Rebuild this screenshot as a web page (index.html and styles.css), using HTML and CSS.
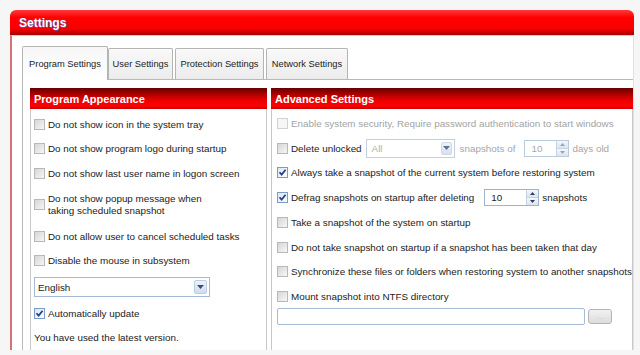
FILE: index.html
```html
<!DOCTYPE html>
<html>
<head>
<meta charset="utf-8">
<title>Settings</title>
<link rel="stylesheet" href="styles.css">
</head>
<body>
<div class="window">
  <div class="titlebar">Settings</div>
  <div class="winbody">
    <div class="tabs">
      <div class="tab active tab-program">Program Settings</div>
      <div class="tab tab-user">User Settings</div>
      <div class="tab tab-protection">Protection Settings</div>
      <div class="tab tab-network">Network Settings</div>
    </div>
    <div class="tabpanel">
      <section class="group group-left">
        <div class="ghead">Program Appearance</div>
        <div class="glist glist-left">
          <div class="opt"><span class="cb"></span><span>Do not show icon in the system tray</span></div>
          <div class="opt"><span class="cb"></span><span>Do not show program logo during startup</span></div>
          <div class="opt"><span class="cb"></span><span>Do not show last user name in logon screen</span></div>
          <div class="opt opt-multi"><span class="cb"></span><span>Do not show popup message when<br>taking scheduled snapshot</span></div>
          <div class="opt"><span class="cb"></span><span>Do not allow user to cancel scheduled tasks</span></div>
          <div class="opt"><span class="cb"></span><span>Disable the mouse in subsystem</span></div>
          <div class="select select-lang"><span class="sel-text">English</span><span class="sel-btn"><svg width="7" height="4" viewBox="0 0 7 4"><path d="M0 0H7L3.5 4Z" fill="#3d4f6c"/></svg></span></div>
          <div class="opt opt-auto"><span class="cb checked"><svg width="9" height="9" viewBox="0 0 9 9"><path d="M1.5 4.2 L3.6 6.6 L7.6 1.8" fill="none" stroke="#1d3f8c" stroke-width="1.7"/></svg></span><span>Automatically update</span></div>
          <div class="note">You have used the latest version.</div>
        </div>
      </section>
      <section class="group group-right">
        <div class="ghead">Advanced Settings</div>
        <div class="glist glist-right">
          <div class="opt opt-r disabled"><span class="cb"></span><span>Enable system security, Require password authentication to start windows</span></div>
          <div class="opt opt-r"><span class="cb"></span><span>Delete unlocked</span>
            <span class="select select-all"><span class="sel-text">All</span><span class="sel-btn"><svg width="7" height="4" viewBox="0 0 7 4"><path d="M0 0H7L3.5 4Z" fill="#5d7396"/></svg></span></span>
            <span class="muted gap-of">snapshots of</span>
            <span class="spin spin-days"><span class="spin-text">10</span><span class="spin-btns"><span class="spin-b"><svg width="5" height="3" viewBox="0 0 5 3"><path d="M0 3H5L2.5 0Z" fill="#9aa6b6"/></svg></span><span class="spin-b"><svg width="5" height="3" viewBox="0 0 5 3"><path d="M0 0H5L2.5 3Z" fill="#9aa6b6"/></svg></span></span></span>
            <span class="muted gap-days">days old</span>
          </div>
          <div class="opt opt-r"><span class="cb checked"><svg width="9" height="9" viewBox="0 0 9 9"><path d="M1.5 4.2 L3.6 6.6 L7.6 1.8" fill="none" stroke="#1d3f8c" stroke-width="1.7"/></svg></span><span>Always take a snapshot of the current system before restoring system</span></div>
          <div class="opt opt-r"><span class="cb checked"><svg width="9" height="9" viewBox="0 0 9 9"><path d="M1.5 4.2 L3.6 6.6 L7.6 1.8" fill="none" stroke="#1d3f8c" stroke-width="1.7"/></svg></span><span>Defrag snapshots on startup after deleting</span>
            <span class="spin spin-defrag"><span class="spin-text">10</span><span class="spin-btns"><span class="spin-b"><svg width="5" height="3" viewBox="0 0 5 3"><path d="M0 3H5L2.5 0Z" fill="#2d3f5c"/></svg></span><span class="spin-b"><svg width="5" height="3" viewBox="0 0 5 3"><path d="M0 0H5L2.5 3Z" fill="#2d3f5c"/></svg></span></span></span>
            <span class="gap-days">snapshots</span>
          </div>
          <div class="opt opt-r"><span class="cb"></span><span>Take a snapshot of the system on startup</span></div>
          <div class="opt opt-r"><span class="cb"></span><span>Do not take snapshot on startup if a snapshot has been taken that day</span></div>
          <div class="opt opt-r"><span class="cb"></span><span>Synchronize these files or folders when restoring system to another snapshots</span></div>
          <div class="opt opt-r opt-last"><span class="cb"></span><span>Mount snapshot into NTFS directory</span></div>
          <div class="pathrow"><span class="pathbox"></span><span class="browse">...</span></div>
        </div>
      </section>
    </div>
  </div>
</div>
</body>
</html>
```

FILE: styles.css
```css
* { box-sizing: border-box; }
html, body { margin: 0; }
body {
  width: 640px;
  height: 355px;
  overflow: hidden;
  background: #f6f6f6;
  padding: 10px 6px 5px 10px;
  font-family: "Liberation Sans", Arial, sans-serif;
  font-size: 9.85px;
  color: #222;
}
.window {
  width: 624px;
  height: 340px;
  display: flex;
  flex-direction: column;
  border-radius: 6px 6px 0 0;
  overflow: hidden;
  background: #fff;
}
.titlebar {
  height: 25px;
  flex: none;
  display: flex;
  align-items: center;
  padding: 0 9px;
  background: linear-gradient(#ff3a3a 0%, #ff0000 30%, #f80000 75%, #c00000 92%, #a80000 100%);
  color: #fff;
  font-weight: bold;
  font-size: 12px;
  text-shadow: 1px 1px 0 #6b4c9c, -1px 0 0 rgba(90,60,150,0.35);
}
.winbody {
  flex: 1;
  display: flex;
  flex-direction: column;
  border-left: 2px solid #d8707c;
  border-right: 1px solid #e2e2e2;
  border-top: 1px solid #f2c4c4;
  padding: 10px 0 0 10px;
  min-height: 0;
}
.tabs {
  height: 33px;
  flex: none;
  display: flex;
  align-items: flex-end;
  font-size: 9.3px;
}
.tab {
  height: 31px;
  display: flex;
  align-items: center;
  justify-content: center;
  border: 1px solid #b4b4b4;
  border-bottom: none;
  border-radius: 2px 2px 0 0;
  background: linear-gradient(#f9f9f9, #ececec);
  margin-left: 2px;
  white-space: nowrap;
}
.tab.active {
  height: 34px;
  margin-left: 0;
  margin-bottom: -1px;
  background: linear-gradient(#f7f7f7, #ffffff);
  position: relative;
  z-index: 1;
}
.tab.active + .tab { margin-left: 0; }
.tab-program { width: 86px; }
.tab-user { width: 65px; }
.tab-protection { width: 89px; }
.tab-network { width: 82px; }
.tabpanel {
  flex: 1;
  display: flex;
  gap: 4px;
  border-top: 1px solid #b8b8b8;
  border-left: 1px solid #b8b8b8;
  padding: 8px 0 0 7px;
  min-height: 0;
}
.group {
  display: flex;
  flex-direction: column;
  border: 1px solid #c8c8c8;
  border-top: none;
  border-bottom: none;
}
.group-left { width: 237px; flex: none; }
.group-right { flex: 1; min-width: 0; }
.ghead {
  height: 21px;
  flex: none;
  display: flex;
  align-items: center;
  padding-left: 4px;
  margin: 0 -1px;
  color: #fff;
  font-weight: bold;
  font-size: 11px;
  background: linear-gradient(#640000 0%, #a80000 28%, #ee0000 60%, #ff0000 85%, #c80000 100%);
  white-space: nowrap;
}
.glist { display: flex; flex-direction: column; }
.glist-left { padding: 3px 0 0 3px; }
.glist-right { padding: 2px 0 0 5px; }
.opt {
  display: flex;
  align-items: center;
  gap: 3px;
  height: 24.5px;
  white-space: nowrap;
}
.opt-multi { height: 38.5px; line-height: 12px; }
.opt-auto { margin-top: 4px; height: 24px; }
.opt-r { height: 24.75px; }
.opt-last { height: 23.75px; }
.cb {
  width: 11px;
  height: 11px;
  flex: none;
  border: 1px solid #b8b8b8;
  background: linear-gradient(135deg, #d6d6d6, #f7f7f7);
  display: flex;
  align-items: center;
  justify-content: center;
}
.cb.checked {
  border-color: #7a9cc6;
  background: linear-gradient(135deg, #dbe5f2, #ffffff);
}
.disabled { color: #a3a3a3; }
.disabled .cb { border-color: #d2d2d2; background: #f6f6f6; }
.muted { color: #a6a6a6; }
.select {
  display: flex;
  align-items: stretch;
  border: 1px solid #a3bad8;
  background: #fff;
}
.select-lang { width: 176px; height: 20px; margin-top: 4px; }
.select-all { width: 89px; height: 19px; margin-left: 1px; border-color: #c3d0df; color: #b0b0b0; }
.sel-text { flex: 1; display: flex; align-items: center; padding-left: 3px; }
.select-all .sel-text { padding-left: 5px; }
.sel-btn {
  width: 13px;
  margin: 2px;
  display: flex;
  align-items: center;
  justify-content: center;
  background: linear-gradient(#eef3fa, #cfdcee);
  border: 1px solid #bccde3;
  border-radius: 2px;
}
.select-all .sel-btn { width: 11px; background: linear-gradient(#eef2f8, #d6e0ee); border-color: #d0dbe8; }
.gap-of { margin-left: 2px; }
.gap-days { margin-left: 0; }
.spin {
  display: flex;
  align-items: stretch;
  height: 17px;
  border: 1px solid #9cb4d2;
  background: #fff;
}
.spin-days { width: 45px; margin-left: 6px; border-color: #bccbdc; color: #a8a8a8; }
.spin-defrag { width: 55px; margin-left: 7px; }
.spin-text { flex: 1; display: flex; align-items: center; padding-left: 6px; }
.spin-btns { width: 12px; display: flex; flex-direction: column; }
.spin-b {
  flex: 1;
  display: flex;
  align-items: center;
  justify-content: center;
  background: linear-gradient(#f4f7fb, #dbe4f0);
  border-left: 1px solid #c5d3e4;
}
.spin-b + .spin-b { border-top: 1px solid #c5d3e4; }
.note { height: 24px; display: flex; align-items: center; }
.pathrow { display: flex; align-items: center; gap: 3px; height: 17px; }
.pathbox {
  width: 308px;
  height: 17px;
  border: 1px solid #a7bcd6;
  border-radius: 2px;
  background: #fff;
}
.browse {
  width: 24px;
  height: 15px;
  border: 1px solid #b4b4b4;
  border-radius: 3px;
  background: linear-gradient(#f2f2f2, #dcdcdc);
  color: #c4c4c4;
  font-size: 8px;
  display: flex;
  align-items: center;
  justify-content: center;
}
```
